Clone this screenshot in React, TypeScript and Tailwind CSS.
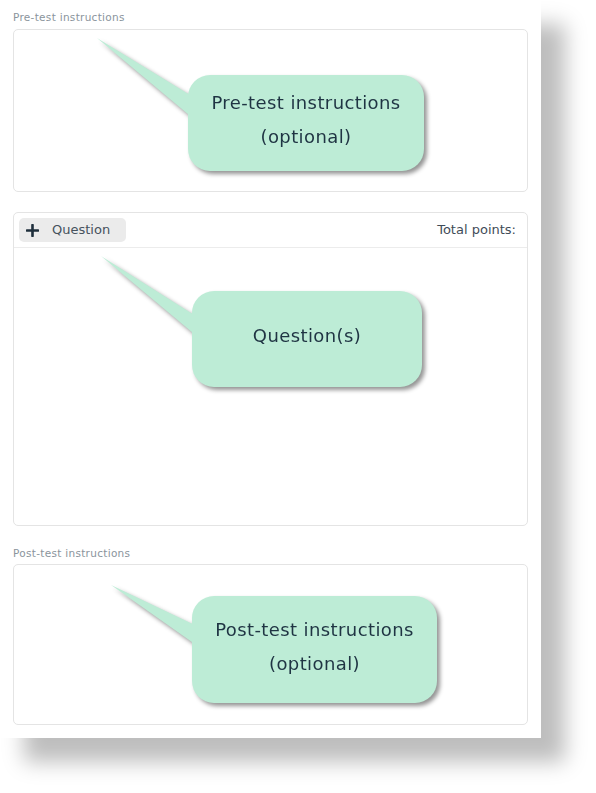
import React from 'react';

const font = { fontFamily: '"DejaVu Sans", "Noto Sans", sans-serif' };

type CalloutProps = {
  x: number;
  y: number;
  bubble: { left: number; top: number; w: number; h: number };
  tail: string;
  lines: string[];
};

function Callout({ x, y, bubble, tail, lines }: CalloutProps) {
  return (
    <div
      className="absolute drop-shadow-[3px_3px_2px_rgba(0,0,0,0.42)]"
      style={{ left: x, top: y, width: bubble.left + bubble.w, height: bubble.top + bubble.h }}
    >
      <svg className="absolute left-0 top-0" width={bubble.left + 20} height={bubble.top + bubble.h}>
        <polygon points={tail} fill="#bdecd6" />
      </svg>
      <div
        className="absolute flex flex-col items-center justify-center rounded-[22px] bg-[#bdecd6] pb-[6px] text-[18px] leading-[34px] tracking-[0.4px] text-[#1f3443]"
        style={{ left: bubble.left, top: bubble.top, width: bubble.w, height: bubble.h }}
      >
        {lines.map((l) => (
          <span key={l}>{l}</span>
        ))}
      </div>
    </div>
  );
}

export default function App() {
  return (
    <div className="min-h-screen bg-white" style={font}>
      <div className="relative w-[541px] bg-white px-[13px] pt-[10px] pb-[13px] shadow-[24px_24px_20px_rgba(0,0,0,0.26)]">
        <div className="text-[10.5px] leading-[14px] tracking-[0.3px] text-[#8a949c] mb-[5px]">Pre-test instructions</div>
        <div className="h-[163px] rounded-[5px] border border-[#e4e4e4]" />

        <div className="mt-[20px] h-[314px] rounded-[5px] border border-[#e4e4e4] flex flex-col">
          <div className="flex items-center justify-between border-b border-[#ececec] px-[5px] py-[5px]">
            <button className="flex h-[24px] w-[107px] items-center gap-[13px] rounded-[5px] bg-[#ebebeb] pl-[7px] text-[13px] text-[#46525d]">
              <svg width="13" height="13" viewBox="0 0 13 13">
                <path d="M6.5 1v11M1 6.5h11" stroke="#1f2f3c" strokeWidth="2.6" strokeLinecap="round" />
              </svg>
              Question
            </button>
            <span className="pr-[6px] text-[13px] text-[#3f4c58]">Total points:</span>
          </div>
        </div>

        <div className="mt-[20px] text-[10.5px] leading-[14px] tracking-[0.3px] text-[#8a949c] mb-[4px]">Post-test instructions</div>
        <div className="h-[161px] rounded-[5px] border border-[#e4e4e4]" />

        <Callout
          x={97}
          y={38}
          bubble={{ left: 91, top: 37, w: 236, h: 96 }}
          tail="0,0 98,60 98,82"
          lines={['Pre-test instructions', '(optional)']}
        />
        <Callout
          x={101}
          y={256}
          bubble={{ left: 91, top: 35, w: 230, h: 96 }}
          tail="0,0 98,62 98,82"
          lines={['Question(s)']}
        />
        <Callout
          x={111}
          y={585}
          bubble={{ left: 81, top: 11, w: 245, h: 107 }}
          tail="0,0 88,42 88,62"
          lines={['Post-test instructions', '(optional)']}
        />
      </div>
    </div>
  );
}
